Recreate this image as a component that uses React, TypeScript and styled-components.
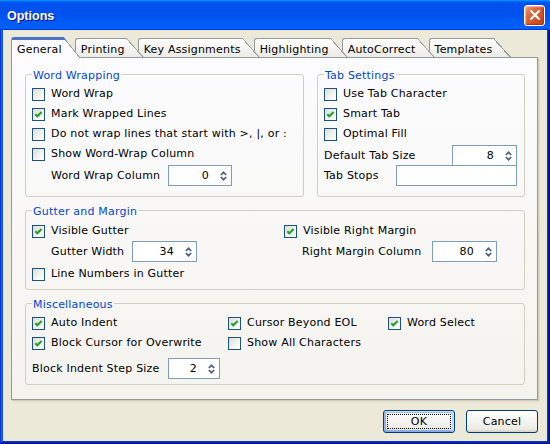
import * as React from "react";
import styled, { createGlobalStyle, css } from "styled-components";

const GlobalStyle = createGlobalStyle`
  html, body {
    margin: 0;
    padding: 0;
    background: #ece9d8;
  }
  body {
    font-family: "DejaVu Sans", "Noto Sans", sans-serif;
    font-size: 11px;
    letter-spacing: 0.2px;
    color: #000;
  }
  * {
    box-sizing: border-box;
  }
`;

const Window = styled.div`
  width: 550px;
  height: 444px;
  display: flex;
  flex-direction: column;
  background: #0855dd;
  box-shadow: inset -1px -1px #00138c, inset 1px 1px #0831d9, inset -2px -2px #001ea0,
    inset 2px 2px #166aee, inset -3px -3px #003bda, inset 3px 3px #0855dd;
`;

const TitleBar = styled.div`
  flex: none;
  height: 30px;
  display: flex;
  align-items: center;
  justify-content: space-between;
  padding: 0 5px 0 7px;
  background: linear-gradient(
    180deg,
    #0997ff,
    #0053ee 8%,
    #0050ee 40%,
    #0060f8 88%,
    #0062fa 93%,
    #005bff 95%,
    #003dd7 96%,
    #003dd7
  );
`;

const Title = styled.span`
  font-family: "Liberation Sans", Arial, sans-serif;
  font-weight: bold;
  font-size: 12.5px;
  letter-spacing: 0;
  color: #fff;
  text-shadow: 1px 1px #0f1089;
  padding-top: 1px;
`;

const CloseButton = styled.div`
  width: 21px;
  height: 21px;
  display: flex;
  align-items: center;
  justify-content: center;
  border: 1px solid #fff;
  border-radius: 3px;
  background: linear-gradient(135deg, #f3a086 0%, #e3673f 32%, #d8532b 62%, #c2401b 100%);
  box-shadow: inset -1px -1px 1px #a8360f, inset 1px 1px 1px #f6b89f;
`;

const Body = styled.div`
  flex: 1;
  margin: 0 3px 3px;
  padding: 7px 9px 8px 8px;
  display: flex;
  flex-direction: column;
  background: #ece9d8;
`;

const TabStrip = styled.div`
  flex: none;
  height: 20px;
  display: flex;
  align-items: flex-end;
  position: relative;
  z-index: 1;
`;

const Tab = styled.div<{ $active?: boolean; $z: number }>`
  position: relative;
  z-index: ${(p) => p.$z};
  flex: none;
  white-space: nowrap;
  line-height: 13px;
  height: ${(p) => (p.$active ? 21 : 19)}px;
  margin-bottom: ${(p) => (p.$active ? -1 : 0)}px;
  padding: ${(p) => (p.$active ? 3 : 4)}px 19px 0 5px;
  border-left: 1px solid #919b9c;
  border-top: ${(p) => (p.$active ? "3px solid #4b74c8" : "1px solid #919b9c")};
  border-top-left-radius: 3px;
  background:
    linear-gradient(
        to top right,
        transparent calc(50% - 1.2px),
        #919b9c calc(50% - 1.2px),
        #919b9c 50%,
        transparent 50%
      )
      right top / 17px 100% no-repeat,
    ${(p) => (p.$active ? "#fcfcfe" : "linear-gradient(180deg, #ffffff, #ecebe6)")};
  background-origin: border-box;
  clip-path: polygon(0 0, calc(100% - 17px) 0, 100% 100%, 0 100%);

  & + & {
    margin-left: -6px;
  }
`;

const Panel = styled.div`
  flex: none;
  display: flex;
  flex-direction: column;
  gap: 4px;
  padding: 7px 12px 14px 13px;
  border: 1px solid #919b9c;
  background: linear-gradient(180deg, #fcfcfe, #f4f3ee);
  box-shadow: 1px 1px 0 #d0cdbb, 2px 2px 0 #e0ddcc;
`;

const TopRow = styled.div`
  display: grid;
  grid-template-columns: 279px 1fr;
  gap: 13px;
`;

const Group = styled.fieldset<{ $pad: string }>`
  margin: 0;
  min-width: 0;
  border: 1px solid #d0d0bf;
  border-radius: 3px;
  padding: ${(p) => p.$pad};
`;

const Legend = styled.legend`
  margin: 0;
  padding: 4px 1px 0;
  line-height: 14px;
  color: #0046d5;
`;

const CheckRow = styled.div`
  display: flex;
  align-items: center;
  gap: 6px;
  height: 20px;
  white-space: nowrap;
`;

const CheckLabel = styled.span`
  line-height: 13px;
  padding-bottom: 1px;
`;

const Box = styled.span`
  width: 13px;
  height: 13px;
  flex: none;
  display: flex;
  border: 1px solid #1c5180;
  background: linear-gradient(135deg, #dcdcd7 0%, #f4f4f0 60%, #ffffff 100%);
`;

const FieldRow = styled.div<{ $indent?: number; $top?: number; $spread?: boolean }>`
  display: flex;
  align-items: center;
  height: 21px;
  white-space: nowrap;
  padding-left: ${(p) => p.$indent ?? 0}px;
  margin-top: ${(p) => p.$top ?? 0}px;
  justify-content: ${(p) => (p.$spread ? "space-between" : "flex-start")};
`;

const FieldLabel = styled.span<{ $w?: number }>`
  flex: none;
  width: ${(p) => (p.$w ? `${p.$w}px` : "auto")};
  padding-bottom: 1px;
`;

const SpinBox = styled.div<{ $w: number }>`
  flex: none;
  width: ${(p) => p.$w}px;
  height: 21px;
  display: flex;
  align-items: center;
  justify-content: flex-end;
  padding-right: 4px;
  border: 1px solid #7f9db9;
  background: #fff;
`;

const SpinValue = styled.span`
  margin-right: 11px;
`;

const TextBox = styled.div<{ $w: number }>`
  flex: none;
  width: ${(p) => p.$w}px;
  height: 21px;
  border: 1px solid #7f9db9;
  background: #fff;
`;

const Columns = styled.div<{ $cols: string; $top?: number }>`
  display: grid;
  grid-template-columns: ${(p) => p.$cols};
  margin-top: ${(p) => p.$top ?? 0}px;
`;

const ButtonRow = styled.div`
  flex: none;
  display: flex;
  justify-content: flex-end;
  gap: 11px;
  margin-top: 10px;
`;

const Button = styled.button<{ $default?: boolean }>`
  width: 72px;
  height: 23px;
  padding: 0;
  font: inherit;
  letter-spacing: inherit;
  color: #000;
  border: 1px solid #003c74;
  border-radius: 3px;
  background: linear-gradient(180deg, #ffffff, #ecebe6 86%, #d6d0c5);
  ${(p) =>
    p.$default &&
    css`
      box-shadow: inset -1px 1px #cee7ff, inset 1px 2px #98b8ea, inset -2px 2px #bcd4f6,
        inset 1px -1px #89ade4, inset 2px -2px #89ade4;
      outline: 1px dotted #000;
      outline-offset: -5px;
    `}
`;

const CloseIcon = () => (
  <svg width="10" height="10" viewBox="0 0 10 10">
    <path d="M1.2 1.2 L8.8 8.8 M8.8 1.2 L1.2 8.8" stroke="#fff" strokeWidth="2.2" strokeLinecap="square" />
  </svg>
);

const Check = ({ checked, label }: { checked?: boolean; label: string }) => (
  <CheckRow>
    <Box>
      {checked && (
        <svg width="11" height="11" viewBox="0 0 11 11">
          <polyline points="2.3,5.2 4.3,7.3 8.6,3" fill="none" stroke="#21a121" strokeWidth="2.1" />
        </svg>
      )}
    </Box>
    <CheckLabel>{label}</CheckLabel>
  </CheckRow>
);

const Spin = ({ value, w }: { value: string; w: number }) => (
  <SpinBox $w={w}>
    <SpinValue>{value}</SpinValue>
    <svg width="7" height="10" viewBox="0 0 7 10">
      <polyline points="0.8,4 3.5,1.3 6.2,4" fill="none" stroke="#4d6185" strokeWidth="1.7" />
      <polyline points="0.8,6 3.5,8.7 6.2,6" fill="none" stroke="#4d6185" strokeWidth="1.7" />
    </svg>
  </SpinBox>
);

const tabs = ["General", "Printing", "Key Assignments", "Highlighting", "AutoCorrect", "Templates"];

export default function App() {
  return (
    <>
      <GlobalStyle />
      <Window>
        <TitleBar>
          <Title>Options</Title>
          <CloseButton>
            <CloseIcon />
          </CloseButton>
        </TitleBar>
        <Body>
          <TabStrip>
            {tabs.map((t, i) => (
              <Tab key={t} $active={i === 0} $z={tabs.length - i}>
                {t}
              </Tab>
            ))}
          </TabStrip>
          <Panel>
            <TopRow>
              <Group $pad="1px 6px 10px 6px">
                <Legend>Word Wrapping</Legend>
                <Check label="Word Wrap" />
                <Check checked label="Mark Wrapped Lines" />
                <Check label="Do not wrap lines that start with >, |, or :" />
                <Check label="Show Word-Wrap Column" />
                <FieldRow $indent={19} $top={1}>
                  <FieldLabel $w={117}>Word Wrap Column</FieldLabel>
                  <Spin value="0" w={64} />
                </FieldRow>
              </Group>
              <Group $pad="1px 7px 10px 6px">
                <Legend>Tab Settings</Legend>
                <Check label="Use Tab Character" />
                <Check checked label="Smart Tab" />
                <Check label="Optimal Fill" />
                <FieldRow $top={1} $spread>
                  <FieldLabel>Default Tab Size</FieldLabel>
                  <Spin value="8" w={65} />
                </FieldRow>
                <FieldRow $top={-1} $spread>
                  <FieldLabel>Tab Stops</FieldLabel>
                  <TextBox $w={121} />
                </FieldRow>
              </Group>
            </TopRow>
            <Group $pad="2px 6px 5px 6px">
              <Legend>Gutter and Margin</Legend>
              <Columns $cols="252px 1fr">
                <Check checked label="Visible Gutter" />
                <Check checked label="Visible Right Margin" />
              </Columns>
              <Columns $cols="252px 1fr">
                <FieldRow $indent={19}>
                  <FieldLabel $w={81}>Gutter Width</FieldLabel>
                  <Spin value="34" w={65} />
                </FieldRow>
                <FieldRow $indent={18}>
                  <FieldLabel $w={130}>Right Margin Column</FieldLabel>
                  <Spin value="80" w={65} />
                </FieldRow>
              </Columns>
              <Columns $cols="1fr" $top={2}>
                <Check label="Line Numbers in Gutter" />
              </Columns>
            </Group>
            <Group $pad="1px 6px 5px 6px">
              <Legend>Miscellaneous</Legend>
              <Columns $cols="196px 160px 1fr">
                <Check checked label="Auto Indent" />
                <Check checked label="Cursor Beyond EOL" />
                <Check checked label="Word Select" />
              </Columns>
              <Columns $cols="196px 160px 1fr">
                <Check checked label="Block Cursor for Overwrite" />
                <Check label="Show All Characters" />
              </Columns>
              <FieldRow $top={5}>
                <FieldLabel $w={136}>Block Indent Step Size</FieldLabel>
                <Spin value="2" w={52} />
              </FieldRow>
            </Group>
          </Panel>
          <ButtonRow>
            <Button $default>OK</Button>
            <Button>Cancel</Button>
          </ButtonRow>
        </Body>
      </Window>
    </>
  );
}
